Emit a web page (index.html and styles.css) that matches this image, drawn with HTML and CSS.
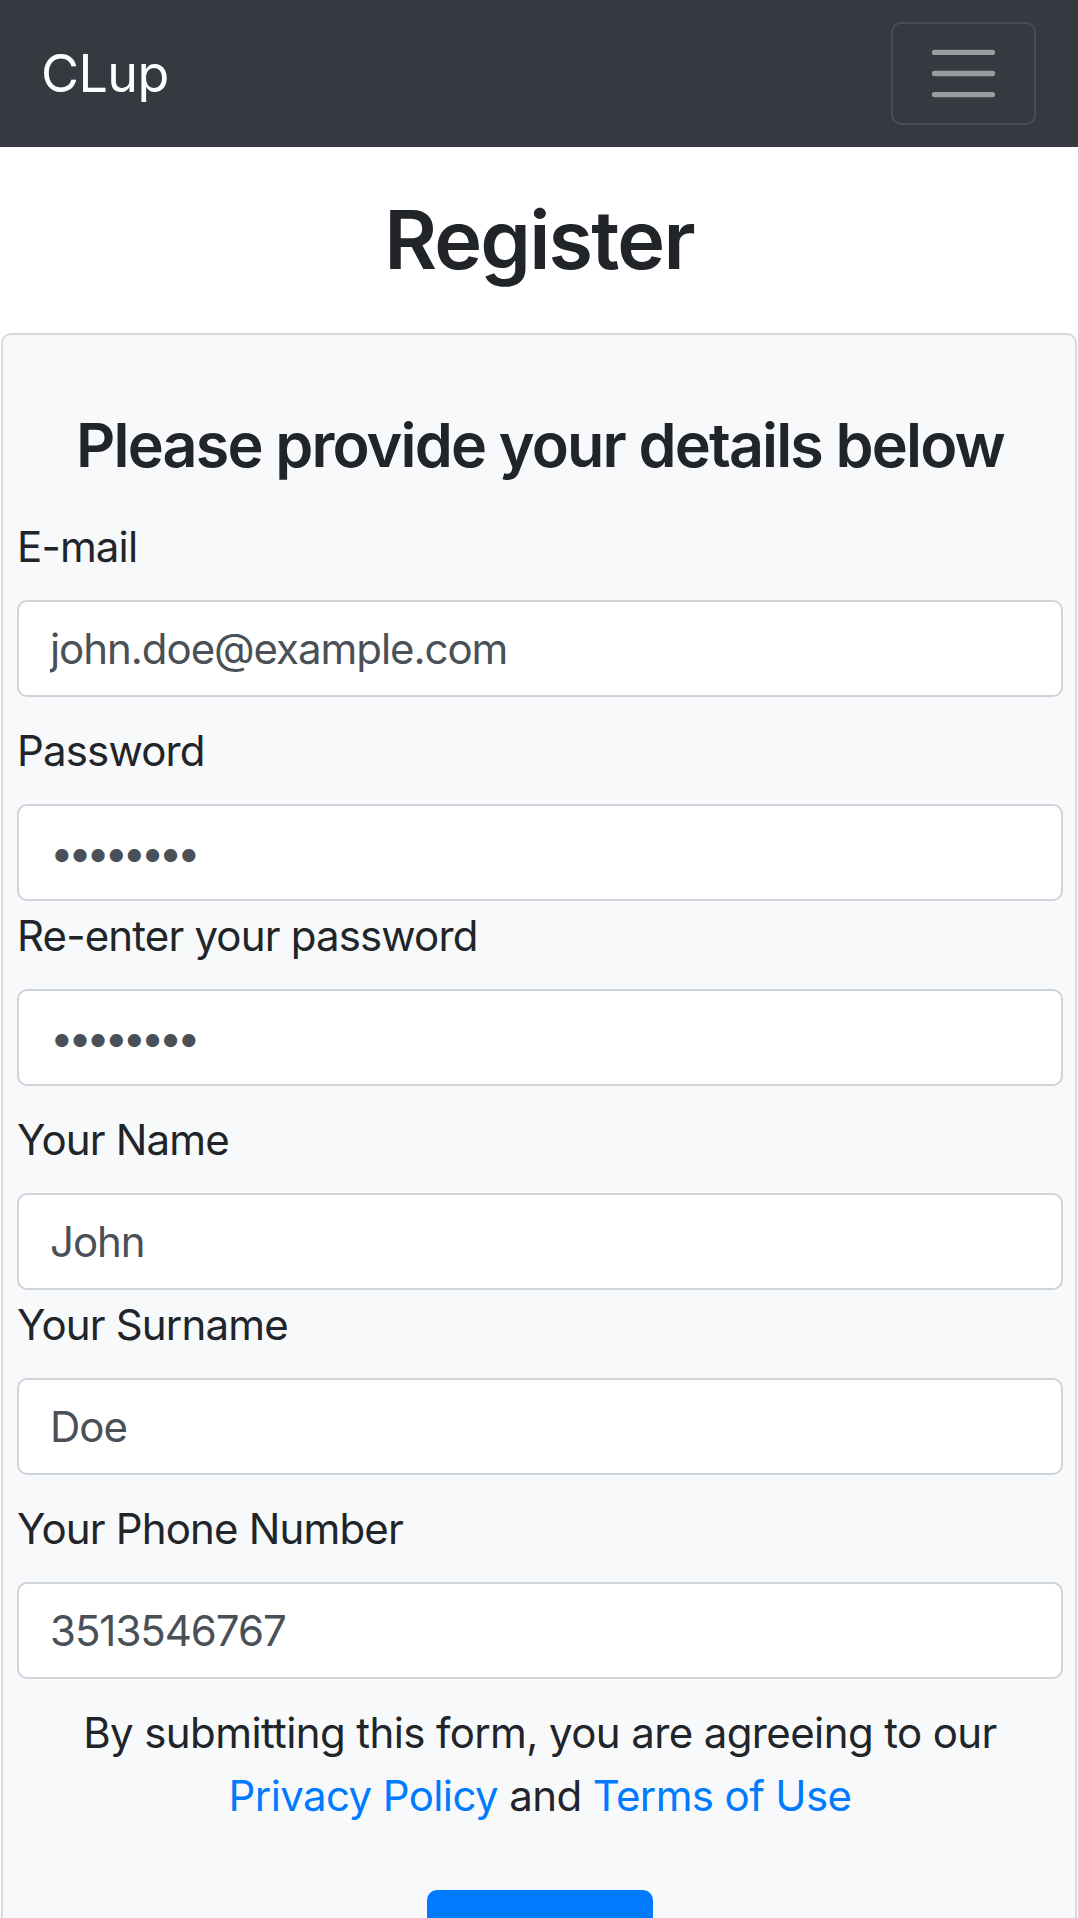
FILE: index.html
```html
<!DOCTYPE html>
<html lang="en">
<head>
<meta charset="utf-8">
<title>CLup - Register</title>
<link rel="stylesheet" href="styles.css">
</head>
<body>
<nav class="navbar">
  <a class="brand" href="#">CLup</a>
  <button class="toggler" type="button" aria-label="Toggle navigation">
    <svg class="toggler-icon" viewBox="0 0 30 30" width="79" height="79" aria-hidden="true">
      <path d="M4 7h22M4 15h22M4 23h22" stroke="rgba(255,255,255,0.5)" stroke-width="2" stroke-linecap="round" fill="none"/>
    </svg>
  </button>
</nav>
<main class="page">
  <h1 class="page-title">Register</h1>
  <div class="card">
    <h2 class="card-title">Please provide your details below</h2>
    <form class="form">
      <div class="group">
        <label class="label" for="email">E-mail</label>
        <input class="control" id="email" type="email" value="john.doe@example.com">
      </div>
      <div class="group">
        <label class="label" for="pw">Password</label>
        <input class="control control-secret" id="pw" type="password" value="password">
        <label class="label label-next" for="pw2">Re-enter your password</label>
        <input class="control control-secret" id="pw2" type="password" value="password">
      </div>
      <div class="group">
        <label class="label" for="name">Your Name</label>
        <input class="control" id="name" type="text" value="John">
        <label class="label label-next" for="surname">Your Surname</label>
        <input class="control" id="surname" type="text" value="Doe">
      </div>
      <div class="group">
        <label class="label" for="phone">Your Phone Number</label>
        <input class="control" id="phone" type="tel" value="3513546767">
      </div>
      <p class="terms">By submitting this form, you are agreeing to our <a class="link" href="#">Privacy Policy</a> and <a class="link" href="#">Terms of Use</a></p>
      <div class="actions">
        <button class="btn-primary" type="submit">Register</button>
      </div>
    </form>
  </div>
</main>
</body>
</html>
```

FILE: styles.css
```css
* {
  box-sizing: border-box;
}

html, body {
  margin: 0;
  padding: 0;
}

body {
  font-family: "Inter", "Liberation Sans", Arial, sans-serif;
  font-size: 42px;
  line-height: 1.5;
  color: #212529;
  background: #ffffff;
  letter-spacing: -0.02em;
}

.navbar {
  height: 147px;
  background: #343a40;
  display: flex;
  align-items: center;
  justify-content: space-between;
  padding: 0 42px 0 41px;
}

.brand {
  color: #ffffff;
  text-decoration: none;
  font-size: 52px;
  line-height: 1.5;
  letter-spacing: -0.01em;
}

.toggler {
  width: 145px;
  height: 103px;
  background: transparent;
  border: 2px solid rgba(255, 255, 255, 0.1);
  border-radius: 10px;
  padding: 0;
  display: flex;
  align-items: center;
  justify-content: center;
}

.toggler-icon {
  display: block;
}

.page-title {
  margin: 43px 0 43px;
  font-size: 81px;
  font-weight: 600;
  line-height: 100px;
  letter-spacing: -0.022em;
  text-align: center;
}

.card {
  margin: 0 1px;
  background: #f8f9fa;
  border: 2px solid rgba(0, 0, 0, 0.125);
  border-radius: 10px;
  padding: 72px 12px 40px 14px;
}

.card-title {
  margin: 0 0 32px;
  font-size: 61px;
  font-weight: 600;
  line-height: 76px;
  letter-spacing: -0.03em;
  text-align: center;
}

.form {
  display: flex;
  flex-direction: column;
}

.group {
  display: flex;
  flex-direction: column;
  margin-bottom: 22px;
}

.label {
  display: block;
  margin-bottom: 22px;
}

.label-next {
  margin-top: 3px;
}

.control {
  display: block;
  width: 100%;
  height: 97px;
  padding: 0 31px;
  font-family: inherit;
  font-size: 42px;
  letter-spacing: -0.025em;
  color: #495057;
  background: #ffffff;
  border: 2px solid #ced4da;
  border-radius: 10px;
  outline: none;
}

.control-secret {
  letter-spacing: -5.5px;
}

.terms {
  margin: 0 0 63px;
  text-align: center;
  letter-spacing: -0.0145em;
}

.link {
  color: #007bff;
  text-decoration: none;
}

.actions {
  display: flex;
  justify-content: center;
}

.btn-primary {
  width: 226px;
  height: 99px;
  font-family: inherit;
  font-size: 42px;
  letter-spacing: -0.02em;
  color: #ffffff;
  background: #007bff;
  border: 2px solid #007bff;
  border-radius: 10px;
  padding: 0 30px;
}
```
